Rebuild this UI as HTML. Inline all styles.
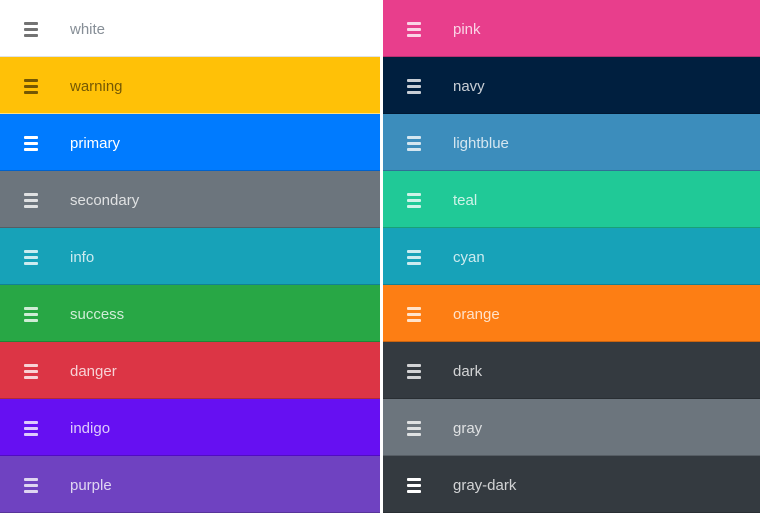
<!DOCTYPE html>
<html><head><meta charset="utf-8"><style>
html,body{margin:0;padding:0;background:#fff;width:760px;height:512px;overflow:hidden;font-family:"Liberation Sans",sans-serif;}
.col{position:absolute;top:0;width:380px;}
.l{left:0}.r{left:383px;width:377px}
.row{height:56px;border-bottom:1px solid rgba(0,0,0,.2);position:relative;}
.ic{position:absolute;left:24px;top:22px;width:14px;height:15px;}
.ic i{display:block;height:2.5px;margin-bottom:3.5px;background:currentColor;border-radius:1px}
.t{position:absolute;left:70px;top:20px;font-size:15px;line-height:20px;}
.d .t,.d .ic{color:rgba(255,255,255,.78)}
.lt .t,.lt .ic{color:rgba(0,0,0,.55)}
</style></head><body>
<div class="col l">
<div class="row lt" style="background:#fff;border-bottom-color:#dee2e6"><div class="ic"><i></i><i></i><i></i></div><div class="t" style="color:#868e96">white</div></div>
<div class="row lt" style="background:#ffc107;border-bottom-color:rgba(255,255,255,.5)"><div class="ic"><i></i><i></i><i></i></div><div class="t">warning</div></div>
<div class="row d" style="background:#007bff"><div class="ic" style="color:#fff"><i></i><i></i><i></i></div><div class="t" style="color:#fff">primary</div></div>
<div class="row d" style="background:#6c757d"><div class="ic"><i></i><i></i><i></i></div><div class="t">secondary</div></div>
<div class="row d" style="background:#17a2b8"><div class="ic"><i></i><i></i><i></i></div><div class="t">info</div></div>
<div class="row d" style="background:#28a745"><div class="ic"><i></i><i></i><i></i></div><div class="t">success</div></div>
<div class="row d" style="background:#dc3545"><div class="ic"><i></i><i></i><i></i></div><div class="t">danger</div></div>
<div class="row d" style="background:#6610f2"><div class="ic"><i></i><i></i><i></i></div><div class="t">indigo</div></div>
<div class="row d" style="background:#6f42c1"><div class="ic"><i></i><i></i><i></i></div><div class="t">purple</div></div>
</div>
<div class="col r">
<div class="row d" style="background:#e83e8c"><div class="ic"><i></i><i></i><i></i></div><div class="t">pink</div></div>
<div class="row d" style="background:#001f3f"><div class="ic"><i></i><i></i><i></i></div><div class="t">navy</div></div>
<div class="row d" style="background:#3c8dbc"><div class="ic"><i></i><i></i><i></i></div><div class="t">lightblue</div></div>
<div class="row d" style="background:#20c997"><div class="ic"><i></i><i></i><i></i></div><div class="t">teal</div></div>
<div class="row d" style="background:#17a2b8"><div class="ic"><i></i><i></i><i></i></div><div class="t">cyan</div></div>
<div class="row d" style="background:#fd7e14"><div class="ic"><i></i><i></i><i></i></div><div class="t">orange</div></div>
<div class="row d" style="background:#343a40"><div class="ic"><i></i><i></i><i></i></div><div class="t">dark</div></div>
<div class="row d" style="background:#6c757d"><div class="ic"><i></i><i></i><i></i></div><div class="t">gray</div></div>
<div class="row d" style="background:#343a40"><div class="ic" style="color:#fff"><i></i><i></i><i></i></div><div class="t">gray-dark</div></div>
</div>
</body></html>
